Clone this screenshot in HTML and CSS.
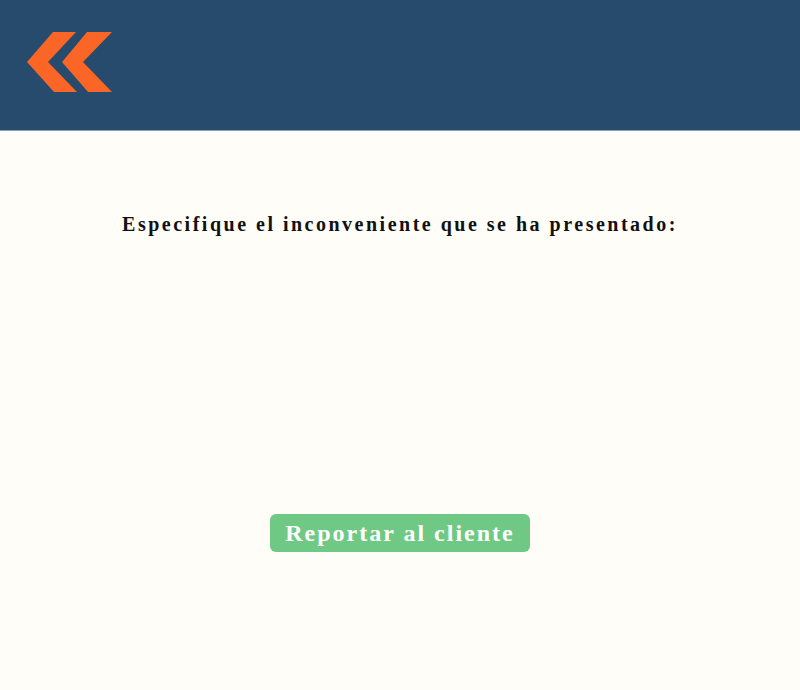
FILE: index.html
```html
<!DOCTYPE html>
<html lang="es">
<head>
<meta charset="utf-8">
<title>Reportar</title>
<link rel="stylesheet" href="styles.css">
</head>
<body>
<header class="topbar">
  <a class="back" href="#" aria-label="Volver">
    <svg width="120" height="100" viewBox="0 0 120 100">
      <polygon fill="#fb6526" points="53,32 76,32 48,62 77,92 54,92 27,62"/>
      <polygon fill="#fb6526" points="87,32 112,32 83,62 112,92 88,92 62,62"/>
    </svg>
  </a>
</header>
<main class="content">
  <h1 class="prompt">Especifique el inconveniente que se ha presentado:</h1>
  <button class="report" type="button">Reportar al cliente</button>
</main>
</body>
</html>
```
FILE: styles.css
```css
html, body {
  margin: 0;
  padding: 0;
  background: #fffdf8;
  font-family: "Liberation Serif", "DejaVu Serif", serif;
}
.topbar {
  height: 130px;
  background: #264b6c;
  border-bottom: 1px solid #8ba0b4;
  display: flex;
  align-items: flex-start;
}
.back {
  display: block;
  width: 120px;
  height: 100px;
}
.back svg {
  display: block;
}
.content {
  display: flex;
  flex-direction: column;
  align-items: center;
}
.prompt {
  margin: 79px 0 0;
  font-size: 20px;
  font-weight: bold;
  letter-spacing: 2.5px;
  color: #111;
  line-height: 28px;
}
.report {
  margin-top: 276px;
  width: 260px;
  height: 38px;
  border: none;
  border-radius: 6px;
  background: #6fc985;
  color: #fff;
  font-family: "Liberation Serif", "DejaVu Serif", serif;
  font-size: 24px;
  font-weight: bold;
  letter-spacing: 2px;
  padding: 0;
  line-height: 38px;
}
```
